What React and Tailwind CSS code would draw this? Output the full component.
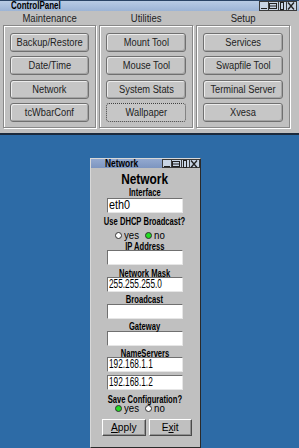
import React from 'react';

const sans = "font-['Liberation_Sans',sans-serif]";

// the reference font is a narrow bitmap Helvetica, so squeeze text horizontally
const Sq = ({ s, left, children }) => (
  <span className={'inline-block whitespace-nowrap ' + s + (left ? ' origin-left' : ' origin-center')}>{children}</span>
);

const TitleButtons = () => (
  <div className="flex h-full">
    <div className="w-[10px] h-full border border-[#3a3a3a] bg-[#c8d4e4]">
      <svg width="8" height="8" viewBox="0 0 8 8"><rect x="1" y="6" width="6" height="1" fill="#202020" /></svg>
    </div>
    <div className="w-[10px] h-full border border-l-0 border-[#3a3a3a] bg-[#c8d4e4]">
      <svg width="8" height="8" viewBox="0 0 8 8">
        <rect x="0.5" y="1.5" width="7" height="5" fill="none" stroke="#202020" />
        <rect x="1" y="3.5" width="6" height="1" fill="#202020" />
      </svg>
    </div>
    <div className="w-[8px] h-full border border-l-0 border-[#3a3a3a] bg-[#c8d4e4]">
      <svg width="6" height="8" viewBox="0 0 6 8"><rect x="1.5" y="0.5" width="3" height="7" fill="none" stroke="#202020" /></svg>
    </div>
    <div className="w-[10px] h-full border border-l-0 border-[#3a3a3a] bg-[#c8d4e4]">
      <svg width="8" height="8" viewBox="0 0 8 8">
        <path d="M1 0.5 L7 7.5 M7 0.5 L1 7.5" stroke="#202020" strokeWidth="1.3" />
      </svg>
    </div>
  </div>
);

const PanelButton = ({ label, focus }) => (
  <div
    className={
      'h-[19px] flex items-center justify-center rounded-[3px] bg-[#c6c6c6] text-[10px] text-[#222] ' +
      (focus
        ? 'border border-dotted border-[#404040]'
        : 'border border-[#707070] shadow-[inset_1px_1px_0_#ececec,inset_-1px_-1px_0_#a4a4a4]')
    }
  >
    <Sq s="scale-x-[0.93]">{label}</Sq>
  </div>
);

const Column = ({ items }) => (
  <div className="border border-[#888] shadow-[inset_1px_1px_0_#fff,1px_1px_0_#fff] px-[6px] pt-[7px] pb-[5px] flex flex-col">
    {items.map((it, i) => (
      <div key={it.label} className={i === 0 ? '' : i === 2 ? 'mt-[5px]' : 'mt-[4px]'}>
        <PanelButton label={it.label} focus={it.focus} />
      </div>
    ))}
  </div>
);

const Field = ({ value, digits, className = '' }) => (
  <div
    className={
      'w-[76px] h-[15px] bg-white border border-t-[#707070] border-l-[#707070] border-r-[#e6e6e6] border-b-[#e6e6e6] text-[12px] leading-[13px] text-black pl-[1px] overflow-hidden ' +
      className
    }
  >
    {value && (
      <Sq s={digits ? 'scale-x-[0.69]' : 'scale-x-[0.9]'} left>
        {value}
      </Sq>
    )}
  </div>
);

const Label = ({ text, className = '' }) => (
  <div className={'h-[7px] leading-[7px] text-[10px] font-bold text-black ' + className}>
    <Sq s="scale-x-[0.76]">{text}</Sq>
  </div>
);

const Radio = ({ on }) => (
  <div
    className={
      'w-[7px] h-[7px] shrink-0 rounded-full border border-[#303030] ' + (on ? 'bg-[#22dd22]' : 'bg-white')
    }
  />
);

const RadioRow = ({ yes, className = '' }) => (
  <div className={'self-start ml-[24px] h-[7px] flex items-center text-[11px] leading-[7px] text-black ' + className}>
    <Radio on={yes} />
    <span className="ml-[2px] w-[15px]">
      <Sq s="scale-x-[0.88]" left>yes</Sq>
    </span>
    <div className="ml-[6px]">
      <Radio on={!yes} />
    </div>
    <span className="ml-[2px] w-[11px]">
      <Sq s="scale-x-[0.88]" left>no</Sq>
    </span>
  </div>
);

const App = () => {
  const cols = [
    [{ label: 'Backup/Restore' }, { label: 'Date/Time' }, { label: 'Network' }, { label: 'tcWbarConf' }],
    [{ label: 'Mount Tool' }, { label: 'Mouse Tool' }, { label: 'System Stats' }, { label: 'Wallpaper', focus: true }],
    [{ label: 'Services' }, { label: 'Swapfile Tool' }, { label: 'Terminal Server' }, { label: 'Xvesa' }],
  ];

  return (
    <div className={'w-[299px] h-[448px] bg-[#2d6ba6] overflow-hidden flex flex-col ' + sans}>
      {/* ControlPanel window */}
      <div className="w-full border-t border-[#2a4466] border-b-2 border-b-[#1c2a3c]">
        <div className="h-[10px] bg-gradient-to-b from-[#b8cbe4] to-[#9cb4d6] flex items-center justify-between pl-[11px] pr-[2px]">
          <span className="text-[10px] font-bold text-black leading-[10px]">
            <Sq s="scale-x-[0.8]" left>ControlPanel</Sq>
          </span>
          <div className="h-[10px]">
            <TitleButtons />
          </div>
        </div>
        <div className="bg-[#c0c0c0] pt-[4px] pb-[5px] pl-[3px]">
          <div className="grid grid-cols-[93px_94px_94px] gap-x-[3px] text-center text-[10px] leading-[8px] h-[8px] text-[#222]">
            <div><Sq s="scale-x-[0.95]">Maintenance</Sq></div>
            <div><Sq s="scale-x-[0.95]">Utilities</Sq></div>
            <div><Sq s="scale-x-[0.95]">Setup</Sq></div>
          </div>
          <div className="grid grid-cols-[93px_94px_94px] gap-x-[3px] mt-[2px]">
            {cols.map((c, i) => (
              <Column key={i} items={c} />
            ))}
          </div>
        </div>
      </div>

      {/* Network window */}
      <div className="ml-[90px] mt-[23px] w-[111px] h-[290px] shrink-0 border border-t-[#d8d8d8] border-l-[#d8d8d8] border-r-[#2a2a2a] border-b-[#2a2a2a] bg-[#c0c0c0] flex flex-col">
        <div className="h-[9px] bg-gradient-to-b from-[#93a9cf] to-[#7d95c0] flex items-center justify-between pl-[14px]">
          <span className="text-[10px] font-bold text-black leading-[9px]">
            <Sq s="scale-x-[0.84]" left>Network</Sq>
          </span>
          <div className="h-[9px]">
            <TitleButtons />
          </div>
        </div>
        <div className="flex flex-col items-center pr-[2px]">
          <div className="mt-[6px] h-[10px] leading-[10px] text-[14px] font-bold text-black">
            <Sq s="scale-x-[0.85]">Network</Sq>
          </div>
          <Label text="Interface" className="mt-[5px]" />
          <Field value="eth0" className="mt-[2px]" />
          <Label text="Use DHCP Broadcast?" className="mt-[5px]" />
          <RadioRow yes={false} className="mt-[7px]" />
          <Label text="IP Address" className="mt-[4px]" />
          <Field value="" />
          <Label text="Network Mask" className="mt-[5px]" />
          <Field value="255.255.255.0" digits />
          <Label text="Broadcast" className="mt-[4px]" />
          <Field value="" className="mt-[1px]" />
          <Label text="Gateway" className="mt-[4px]" />
          <Field value="" className="mt-[1px]" />
          <Label text="NameServers" className="mt-[4px]" />
          <Field value="192.168.1.1" digits />
          <Field value="192.168.1.2" digits className="mt-[3px]" />
          <Label text="Save Configuration?" className="mt-[6px]" />
          <RadioRow yes={true} className="mt-[2px]" />
          <div className="self-start ml-[11px] mt-[7px] flex gap-[3px] text-[11px] text-black">
            <div className="w-[44px] h-[17px] flex items-center justify-center border border-t-white border-l-white border-r-[#4a4a4a] border-b-[#4a4a4a] shadow-[inset_-1px_-1px_0_#909090]">
              <Sq s="scale-x-[0.93]">
                <span className="underline">A</span>pply
              </Sq>
            </div>
            <div className="w-[43px] h-[17px] flex items-center justify-center border border-t-white border-l-white border-r-[#4a4a4a] border-b-[#4a4a4a] shadow-[inset_-1px_-1px_0_#909090]">
              <Sq s="scale-x-[0.93]">
                E<span className="underline">x</span>it
              </Sq>
            </div>
          </div>
        </div>
      </div>
    </div>
  );
};

export default App;
